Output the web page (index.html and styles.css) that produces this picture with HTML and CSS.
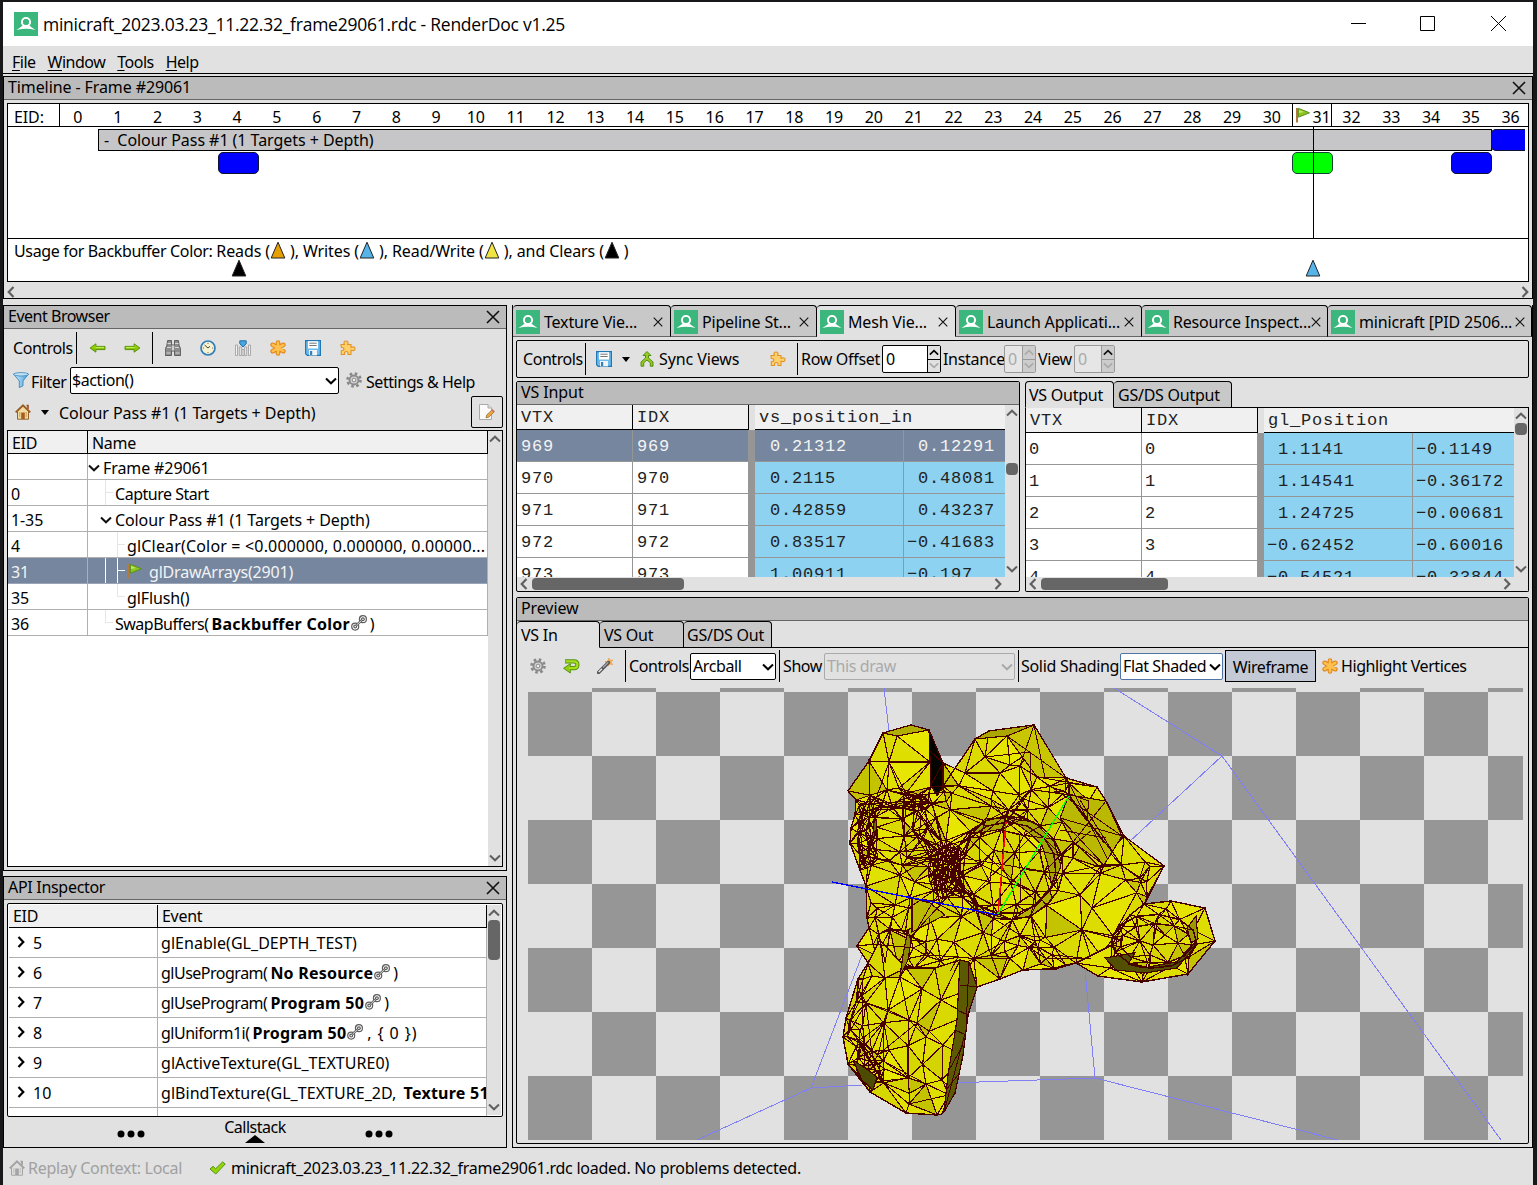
FILE: index.html
```html
<!DOCTYPE html>
<html lang="en">
<head>
<meta charset="utf-8">
<title>minicraft_2023.03.23_11.22.32_frame29061.rdc - RenderDoc v1.25</title>
<link rel="stylesheet" href="styles.css">
</head>
<body>
<svg width="0" height="0" class="defs">
<defs>
<linearGradient id="gb" x1="0" y1="0" x2="1" y2="0"><stop offset="0" stop-color="#d8f0fc"/><stop offset="1" stop-color="#3f9fd8"/></linearGradient>
<linearGradient id="gg" x1="0" y1="0" x2="0" y2="1"><stop offset="0" stop-color="#a9e000"/><stop offset="1" stop-color="#72b400"/></linearGradient>
<symbol id="logo" viewBox="0 0 24 24"><rect width="24" height="24" fill="#3bb77e"/><circle cx="12" cy="10" r="4" fill="none" stroke="#fff" stroke-width="2.2"/><path d="M2.5 18 Q7 15.5 9.5 12.5 L14.5 12.5 Q17 15.5 21.5 18 Q12 15.6 2.5 18Z" fill="#fff"/><circle cx="12" cy="10" r="2.9" fill="#3bb77e"/></symbol>
<symbol id="x" viewBox="0 0 14 14"><path d="M1 1L13 13M13 1L1 13" stroke="#111" stroke-width="1.6" fill="none"/></symbol>
<symbol id="down" viewBox="0 0 12 8"><path d="M1 1.5L6 6.3L11 1.5" stroke="currentColor" stroke-width="2" fill="none"/></symbol>
<symbol id="up" viewBox="0 0 12 8"><path d="M1 6.5L6 1.7L11 6.5" stroke="currentColor" stroke-width="2" fill="none"/></symbol>
<symbol id="right" viewBox="0 0 8 12"><path d="M1.5 1L6.3 6L1.5 11" stroke="currentColor" stroke-width="2.2" fill="none"/></symbol>
<symbol id="left" viewBox="0 0 8 12"><path d="M6.5 1L1.7 6L6.5 11" stroke="currentColor" stroke-width="2.2" fill="none"/></symbol>
<symbol id="tri" viewBox="0 0 16 18"><path d="M8 1.2L14.8 17H1.2Z" fill="currentColor" stroke="#222" stroke-width="1"/></symbol>
<symbol id="flag" viewBox="0 0 16 16"><path d="M2 1V15.5" stroke="#b07a3a" stroke-width="2"/><path d="M3.4 1.3L14.5 5.8L3.4 10.2Z" fill="#8cc61e" stroke="#5c8f1e"/><path d="M4 3L9 5L4 6Z" fill="#c3e86b"/></symbol>
<symbol id="arrR" viewBox="0 0 16 10"><path d="M.5 3.4H9.6V.8L15.4 5L9.6 9.2V6.6H.5Z" fill="url(#gg)" stroke="#5a9410"/><path d="M1.5 4.4H10" stroke="#d5f57a" stroke-width=".8"/></symbol>
<symbol id="bino" viewBox="0 0 16 16"><path d="M2.600 .5H6.500V5H9.500V.5H13.400L14.200 6L15.700 8.500V15.500H9.500V11H6.500V15.500H.3V8.500L1.800 6Z" fill="#8c8c8c" stroke="#555" stroke-width=".9"/><path d="M1.500 13H5.500M10.500 13H14.500M2.500 3.500H6M10 3.500H13.500M2 7.500H6M10 7.500H14" stroke="#d6d6d6"/><path d="M8 5.500V10.500" stroke="#eee" stroke-width="1.4"/></symbol>
<symbol id="clock" viewBox="0 0 16 16"><circle cx="8" cy="8" r="7" fill="#f7f1cf" stroke="#2f7fbd" stroke-width="1.7"/><path d="M4.500 5L8 8L10 6.300" stroke="#444" fill="none"/><path d="M8 2.800V4M8 12V13.200M2.800 8H4M12 8H13.200" stroke="#777"/></symbol>
<symbol id="bars" viewBox="0 0 16 16"><path d="M.5 15.500V5H2.500V15.500ZM4.300 15.500V7H6.300V15.500ZM9.700 15.500V7H11.700V15.500ZM13.500 15.500V5H15.500V15.500ZM7 15.500V9.500H9V15.500Z" fill="#f1f1f1" stroke="#999" stroke-width=".8"/><path d="M4.800.8H11.200V3.800L8 7L4.800 3.800Z" fill="#4ba4dc" stroke="#1f70ad"/></symbol>
<symbol id="star" viewBox="0 0 16 16"><g stroke="#e08418" stroke-width="4.6" stroke-linecap="round"><path d="M8 2.500V13.500M2.700 4.800L13.300 11.200M13.300 4.800L2.700 11.200"/></g><g stroke="#ffc04d" stroke-width="2.6" stroke-linecap="round"><path d="M8 2.500V13.500M2.700 4.800L13.300 11.200M13.300 4.800L2.700 11.200"/></g></symbol>
<symbol id="save" viewBox="0 0 16 16"><path d="M.6.6H15.400V15.400H2.300L.6 13.700Z" fill="#6dbbec" stroke="#2177b5" stroke-width="1.2"/><rect x="3" y="1.200" width="10" height="7.300" fill="#fff"/><path d="M4.300 3.200H11.700M4.300 5.500H11.700" stroke="#777"/><rect x="4" y="10" width="8" height="5.400" fill="#eef4f8"/><rect x="5" y="11" width="2.200" height="4" fill="#3a7eb2"/></symbol>
<symbol id="ext" viewBox="0 0 16 16"><path d="M1 4.5H4.4Q3 1 6 1T7.7 4.500H11V7.300Q15 6 15 8.800T11 10.200V14.500H8Q8.500 11.500 6.300 11.500T4.500 14.500H1.300V10.700Q4 10.500 4 9T1.300 7.500Z" fill="#ffd06a" stroke="#e09428" stroke-width="1.1"/></symbol>
<symbol id="filter" viewBox="0 0 16 16"><path d="M.5 2L6.300 9V15.600L10 13.800V9L15.500 2Z" fill="url(#gb)" stroke="#3d86bb" stroke-width=".9"/><ellipse cx="8" cy="2.300" rx="7.500" ry="1.700" fill="#bfe2f5" stroke="#3d86bb" stroke-width=".8"/></symbol>
<symbol id="gear" viewBox="0 0 16 16"><circle cx="8" cy="8" r="6.500" fill="none" stroke="#888" stroke-width="2.600" stroke-dasharray="2.550 2.550"/><circle cx="8" cy="8" r="4.500" fill="#d5d5d5" stroke="#8b8b8b" stroke-width="1.900"/><circle cx="8" cy="8" r="1.900" fill="#eee" stroke="#888"/></symbol>
<symbol id="home" viewBox="0 0 16 16"><path d="M2.5 7V15.200H13.500V7L8 2Z" fill="#f3dca0" stroke="#926332"/><path d="M11.500 1.500H13V5" stroke="#9b4b25" fill="none" stroke-width="1.600"/><path d="M.7 8.400L8 1.400L15.300 8.400" fill="none" stroke="#9a6028" stroke-width="2"/><rect x="6.200" y="8.500" width="3.600" height="6.500" fill="#a85d20"/><path d="M4.800 8V13M11.200 8V13" stroke="#c99a50"/></symbol>
<symbol id="edit" viewBox="0 0 16 16"><path d="M.5 .5H9L12.500 4V15.500H.5Z" fill="#fbfbfb" stroke="#aaa"/><path d="M9 .5V4H12.500" fill="#ddd" stroke="#aaa"/><path d="M7 13.800L7.800 11L13.200 5.600L15.300 7.700L9.800 13.100Z" fill="#f0a93a" stroke="#8e6935" stroke-width=".8"/><path d="M12.300 6.500L14.400 8.600L15.600 7.200L13.600 5.200Z" fill="#d2706a"/></symbol>
<symbol id="link" viewBox="0 0 16 16"><g fill="none" stroke="#5d5d5d" stroke-width="1.2"><circle cx="4.200" cy="11.600" r="3.500"/><circle cx="4.200" cy="11.600" r="1.400"/><circle cx="11.900" cy="4.200" r="3.500"/><circle cx="11.900" cy="4.200" r="1.400"/></g><path d="M5.500 10.200L10.600 5.400" stroke="#666" stroke-width="2.500"/><path d="M5.700 10L10.400 5.600" stroke="#ddd" stroke-width=".9"/></symbol>
<symbol id="sync" viewBox="0 0 14 16"><path d="M7 .5L11 4.500H8.500V7L13 11V15.200H10.300V11.800L7 9L3.700 11.800V15.200H1V11L5.500 7V4.500H3Z" fill="#9acb21" stroke="#4f8d12"/></symbol>
<symbol id="undo" viewBox="0 0 17 16"><path d="M2 3.300H11Q14.400 3.300 14.400 6.700T11 10.200H6" fill="none" stroke="#589115" stroke-width="4.200"/><path d="M7.300 5.700V15L.6 10.300Z" fill="#8fd00b" stroke="#589115"/><path d="M2.500 3.300H11Q14.400 3.300 14.400 6.700T11 10.200H6" fill="none" stroke="#a4df18" stroke-width="2.200"/></symbol>
<symbol id="wand" viewBox="0 0 16 16"><path d="M12 0L13 2.500L15.800 2L14 4.300L15.800 6.600L12.900 6L11 8L10.700 5L8 4L10.800 3Z" fill="#ffbb55" stroke="#ed8f2d" stroke-width=".6"/><path d="M1.500 14.500L11.500 4.500" stroke="#555" stroke-width="3.400" stroke-linecap="round"/><path d="M1.700 14L5 10.800" stroke="#eee" stroke-width="1.300"/><path d="M6 9.500L11.300 4.300" stroke="#a0a8b5" stroke-width="1.200"/></symbol>
<symbol id="check" viewBox="0 0 17 14"><path d="M1 8L4 5.300L6.600 7.800L13.600 .9L16.200 3L6.800 13Z" fill="#92d50b" stroke="#578f12"/></symbol>
</defs>
</svg>

<div class="window">
  <header class="titlebar">
    <svg class="i24"><use href="#logo"/></svg>
    <span class="title">minicraft_2023.03.23_11.22.32_frame29061.rdc - RenderDoc v1.25</span>
    <svg class="winbtns" viewBox="0 0 157 18"><path d="M1 8.500H16M70.500 1.500H84.500V15.500H70.500ZM141 1L156 16M156 1L141 16" fill="none" stroke="#000"/></svg>
  </header>
  <nav class="menubar"><span><u>F</u>ile</span><span><u>W</u>indow</span><span><u>T</u>ools</span><span><u>H</u>elp</span></nav>

  <section class="dock timeline">
    <div class="dockhead"><span>Timeline - Frame #29061</span><svg class="cx"><use href="#x"/></svg></div>
    <div class="tl">
      <div class="ruler"><b class="eid">EID:</b><div class="ticks"><i>0</i><i>1</i><i>2</i><i>3</i><i>4</i><i>5</i><i>6</i><i>7</i><i>8</i><i>9</i><i>10</i><i>11</i><i>12</i><i>13</i><i>14</i><i>15</i><i>16</i><i>17</i><i>18</i><i>19</i><i>20</i><i>21</i><i>22</i><i>23</i><i>24</i><i>25</i><i>26</i><i>27</i><i>28</i><i>29</i><i>30</i><i class="cur"><svg class="i16"><use href="#flag"/></svg>31</i><i>32</i><i>33</i><i>34</i><i>35</i><i>36</i></div></div>
      <div class="lanes">
        <div class="pass">-&nbsp; Colour Pass #1 (1 Targets + Depth)</div>
        <div class="ev e36"></div><div class="ev e4"></div><div class="ev e31"></div><div class="ev e35"></div>
        <div class="cursor"></div>
      </div>
      <div class="usage">
        <div class="legend"><em>Usage for Backbuffer Color: </em>Reads (<svg class="tri or"><use href="#tri"/></svg>), Writes (<svg class="tri bl"><use href="#tri"/></svg>), Read/Write (<svg class="tri ye"><use href="#tri"/></svg>), and Clears (<svg class="tri"><use href="#tri"/></svg>)</div>
        <svg class="tri m4"><use href="#tri"/></svg><svg class="tri bl m31"><use href="#tri"/></svg>
      </div>
    </div>
    <div class="hs"><svg class="ch"><use href="#left"/></svg><svg class="ch"><use href="#right"/></svg></div>
  </section>

  <main class="work">
    <div class="leftcol">
      <section class="dock events">
        <div class="dockhead"><span class="tight">Event Browser</span><svg class="cx"><use href="#x"/></svg></div>
        <div class="bar b1"><span class="w63">Controls</span><hr><svg class="arr flip"><use href="#arrR"/></svg><svg class="arr"><use href="#arrR"/></svg><hr class="h2"><div class="tools"><svg class="i16"><use href="#bino"/></svg><svg class="i16"><use href="#clock"/></svg><svg class="i16"><use href="#bars"/></svg><svg class="i16"><use href="#star"/></svg><svg class="i16"><use href="#save"/></svg><svg class="i16"><use href="#ext"/></svg></div></div>
        <div class="bar b2"><svg class="i16"><use href="#filter"/></svg><span class="flt">Filter</span><div class="combo c1"><span>$action()</span><svg class="dn"><use href="#down"/></svg></div><svg class="i16 g"><use href="#gear"/></svg><span class="set">Settings &amp; Help</span></div>
        <div class="bar b3"><svg class="i16"><use href="#home"/></svg><i class="caret"></i><span class="crumb">Colour Pass #1 (1 Targets + Depth)</span><div class="editbtn"><svg class="i16"><use href="#edit"/></svg></div></div>
        <div class="table t1">
          <div class="rows">
            <div class="hd"><span>EID</span><span>Name</span></div>
            <div class="r"><span></span><span class="n0"><svg class="dn"><use href="#down"/></svg><em>Frame #29061</em></span></div>
            <div class="r"><span>0</span><span class="n1 leaf tight">Capture Start</span></div>
            <div class="r"><span>1-35</span><span class="n1x"><svg class="dn"><use href="#down"/></svg><em>Colour Pass #1 (1 Targets + Depth)</em></span></div>
            <div class="r"><span>4</span><span class="n2 leaf2 clr">glClear(Color = &lt;0.000000, 0.000000, 0.00000...</span></div>
            <div class="r sel"><span>31</span><span class="n2 leaf2 draw"><svg class="i16 fl"><use href="#flag"/></svg>glDrawArrays(2901)</span></div>
            <div class="r"><span>35</span><span class="n2 leaf2 end">glFlush()</span></div>
            <div class="r"><span>36</span><span class="n1 leaf end"><em class="pre">SwapBuffers(</em><b>Backbuffer Color</b><svg class="i16"><use href="#link"/></svg>)</span></div>
          </div>
          <div class="vs"><svg class="cv"><use href="#up"/></svg><svg class="cv"><use href="#down"/></svg></div>
        </div>
      </section>
      <section class="dock api">
        <div class="dockhead"><span class="api-t">API Inspector</span><svg class="cx"><use href="#x"/></svg></div>
        <div class="table t2">
          <div class="rows">
            <div class="hd"><span>EID</span><span>Event</span></div>
            <div class="r"><span><svg class="rt"><use href="#right"/></svg>5</span><span>glEnable(GL_DEPTH_TEST)</span></div>
            <div class="r"><span><svg class="rt"><use href="#right"/></svg>6</span><span><em class="pre">glUseProgram(</em><b>No Resource</b><svg class="i16"><use href="#link"/></svg>)</span></div>
            <div class="r"><span><svg class="rt"><use href="#right"/></svg>7</span><span><em class="pre">glUseProgram(</em><b>Program 50</b><svg class="i16"><use href="#link"/></svg>)</span></div>
            <div class="r"><span><svg class="rt"><use href="#right"/></svg>8</span><span><em class="pre">glUniform1i(</em><b>Program 50</b><svg class="i16"><use href="#link"/></svg><em class="args">, { 0 })</em></span></div>
            <div class="r"><span><svg class="rt"><use href="#right"/></svg>9</span><span>glActiveTexture(GL_TEXTURE0)</span></div>
            <div class="r"><span><svg class="rt"><use href="#right"/></svg>10</span><span>glBindTexture(GL_TEXTURE_2D,&nbsp;<b>Texture 51</b></span></div>
            <div class="r"><span></span><span></span></div>
          </div>
          <div class="vs"><svg class="cv"><use href="#up"/></svg><i class="thumb"></i><svg class="cv"><use href="#down"/></svg></div>
        </div>
        <div class="callstack"><svg class="dots" viewBox="0 0 28 8"><circle cx="4" cy="4" r="3.500"/><circle cx="14" cy="4" r="3.500"/><circle cx="24" cy="4" r="3.500"/></svg><div class="cs"><span>Callstack</span><i></i></div><svg class="dots" viewBox="0 0 28 8"><circle cx="4" cy="4" r="3.500"/><circle cx="14" cy="4" r="3.500"/><circle cx="24" cy="4" r="3.500"/></svg></div>
      </section>
    </div>

    <div class="rightcol">
      <div class="tabs">
        <div class="tab w158"><svg class="i24"><use href="#logo"/></svg><span>Texture Vie...</span><svg class="tx"><use href="#x"/></svg></div>
        <div class="tab w146"><svg class="i24"><use href="#logo"/></svg><span>Pipeline St...</span><svg class="tx"><use href="#x"/></svg></div>
        <div class="tab w139 on"><svg class="i24"><use href="#logo"/></svg><span>Mesh Vie...</span><svg class="tx"><use href="#x"/></svg></div>
        <div class="tab w186"><svg class="i24"><use href="#logo"/></svg><span>Launch Applicati...</span><svg class="tx"><use href="#x"/></svg></div>
        <div class="tab w186"><svg class="i24"><use href="#logo"/></svg><span>Resource Inspect...</span><svg class="tx"><use href="#x"/></svg></div>
        <div class="tab w204"><svg class="i24"><use href="#logo"/></svg><span>minicraft [PID 2506...</span><svg class="tx"><use href="#x"/></svg></div>
      </div>
      <div class="panes">
        <div class="mbar"><span class="w63">Controls</span><hr><svg class="i16 s1"><use href="#save"/></svg><i class="caret"></i><svg class="sy"><use href="#sync"/></svg><span class="w116">Sync Views</span><svg class="i16 s2"><use href="#ext"/></svg><hr><span class="ro">Row Offset</span><div class="spin k1"><span>0</span><div><svg><use href="#up"/></svg><svg class="dim"><use href="#down"/></svg></div></div><span class="in">Instance</span><div class="spin off"><span>0</span><div><svg><use href="#up"/></svg><svg><use href="#down"/></svg></div></div><span class="vw">View</span><div class="spin off k3"><span>0</span><div><svg class="act"><use href="#up"/></svg><svg><use href="#down"/></svg></div></div></div>
        <div class="split">
          <div class="vsin">
            <div class="dockhead"><span>VS Input</span></div>
            <div class="grid gi">
              <div class="cells">
                <div class="gh"><span>VTX</span><span>IDX</span><i></i><span class="wide">vs_position_in</span></div>
                <div class="gr sel"><span>969</span><span>969</span><i></i><span class="v">&nbsp;0.21312</span><span class="v">&nbsp;0.12291</span></div>
                <div class="gr"><span>970</span><span>970</span><i></i><span class="v">&nbsp;0.2115</span><span class="v">&nbsp;0.48081</span></div>
                <div class="gr"><span>971</span><span>971</span><i></i><span class="v">&nbsp;0.42859</span><span class="v">&nbsp;0.43237</span></div>
                <div class="gr"><span>972</span><span>972</span><i></i><span class="v">&nbsp;0.83517</span><span class="v">−0.41683</span></div>
                <div class="gr"><span>973</span><span>973</span><i></i><span class="v">&nbsp;1.00911</span><span class="v">−0.197</span></div>
              </div>
              <div class="vs"><svg class="cv"><use href="#up"/></svg><i class="thumb"></i><svg class="cv"><use href="#down"/></svg></div>
            </div>
            <div class="ghs"><svg class="ch"><use href="#left"/></svg><i></i><svg class="ch"><use href="#right"/></svg></div>
          </div>
          <div class="vsout">
            <div class="stabs"><div class="stab on a">VS Output</div><div class="stab b">GS/DS Output</div><div class="fill"></div></div>
            <div class="outbox">
            <div class="grid go">
              <div class="cells">
                <div class="gh"><span>VTX</span><span>IDX</span><i></i><span class="wide">gl_Position</span></div>
                <div class="gr"><span>0</span><span>0</span><i></i><span class="v">&nbsp;1.1141</span><span class="v">−0.1149</span></div>
                <div class="gr"><span>1</span><span>1</span><i></i><span class="v">&nbsp;1.14541</span><span class="v">−0.36172</span></div>
                <div class="gr"><span>2</span><span>2</span><i></i><span class="v">&nbsp;1.24725</span><span class="v">−0.00681</span></div>
                <div class="gr"><span>3</span><span>3</span><i></i><span class="v">−0.62452</span><span class="v">−0.60016</span></div>
                <div class="gr"><span>4</span><span>4</span><i></i><span class="v">−0.54521</span><span class="v">−0.33844</span></div>
              </div>
              <div class="vs"><svg class="cv"><use href="#up"/></svg><i class="thumb"></i><svg class="cv"><use href="#down"/></svg></div>
            </div>
            <div class="ghs g2"><svg class="ch"><use href="#left"/></svg><i></i><svg class="ch"><use href="#right"/></svg></div>
            </div>
          </div>
        </div>
        <div class="preview">
          <div class="dockhead"><span>Preview</span></div>
          <div class="stabs p"><div class="stab on a">VS In</div><div class="stab b">VS Out</div><div class="stab c">GS/DS Out</div><div class="fill"></div></div>
          <div class="pbar"><svg class="i16 q1"><use href="#gear"/></svg><svg class="q2"><use href="#undo"/></svg><svg class="i16 q3"><use href="#wand"/></svg><hr><span class="pc">Controls</span><div class="combo c2"><span>Arcball</span><svg class="dn"><use href="#down"/></svg></div><hr><span class="ps">Show</span><div class="combo c3"><span>This draw</span><svg class="dn"><use href="#down"/></svg></div><hr><span class="pss">Solid Shading</span><div class="combo c4"><span>Flat Shaded</span><svg class="dn"><use href="#down"/></svg></div><div class="wire">Wireframe</div><svg class="i16 q4"><use href="#star"/></svg><span class="hv">Highlight Vertices</span></div>
          <svg id="view" class="view" viewBox="528 688 995 452"></svg>
        </div>
      </div>
    </div>
  </main>
  <footer class="status"><svg class="i16 grey"><use href="#home"/></svg><span class="rc">Replay Context: Local</span><svg class="ck"><use href="#check"/></svg><span class="msg">minicraft_2023.03.23_11.22.32_frame29061.rdc loaded. No problems detected.</span></footer>
</div>
<script src="mesh.js"></script>
</body>
</html>
```
FILE: styles.css
```css
* { box-sizing: border-box; }
body { margin: 0; padding: 2px 4px 0 3px; width: 1537px; height: 1185px; overflow: hidden; background: #18181a; font: 16px/22px "Noto Sans", sans-serif; color: #000; letter-spacing: -.1px; }
svg { display: block; flex: none; overflow: visible; }
i, em { font-style: normal; }
span { white-space: nowrap; }
hr { margin: 0; border: 0; width: 1px; height: 32px; background: #000; flex: none; }
.defs { position: absolute; }
.i16 { width: 16px; height: 16px; }
.i24 { width: 24px; height: 24px; }
.tight { letter-spacing: -.48px; }
.api-t { letter-spacing: -.3px; }
.window { height: 1183px; background: #e1e1e1; display: flex; flex-direction: column; }
.titlebar { height: 44px; background: #fff; display: flex; align-items: center; padding: 0 26px 0 11px; }
.title { flex: 1; margin-left: 5px; font: 17.5px "Open Sans", sans-serif; letter-spacing: -.25px; }
.winbtns { width: 157px; height: 18px; }
.menubar { height: 28px; border-bottom: 1px solid #000; display: flex; padding: 5px 0 0 9px; gap: 12px; letter-spacing: -.5px; }
.menubar u { text-underline-offset: 2px; }
.dock { border: 1px solid #000; background: #e1e1e1; display: flex; flex-direction: column; }
.dockhead { height: 23px; flex: none; background: #bbb; border-bottom: 1px solid #666; display: flex; align-items: center; justify-content: space-between; padding: 0 6px 2px 4px; }
.cx { width: 14px; height: 14px; margin-top: 2px; }

.timeline { height: 223px; margin-top: 2px; padding: 0; flex: none; }
.tl { margin: 3px 3px 0 3px; height: 179px; border: 1px solid #000; background: #fff; display: flex; flex-direction: column; }
.ruler { height: 23px; border-bottom: 1px solid #000; display: flex; }
.eid { width: 52px; border-right: 1px solid #000; font-weight: 400; padding: 2px 0 0 6px; flex: none; }
.ticks { display: grid; grid-template-columns: repeat(37, 39.8px); margin-left: -2px; }
.ticks i { text-align: center; padding-top: 2px; height: 22px; }
.ticks .cur { border: solid #000; border-width: 0 1px; display: flex; justify-content: space-between; padding-left: 2px; }
.cur .i16 { margin-top: 1px; }
.lanes { position: relative; height: 111px; }
.pass { position: absolute; left: 90px; top: 2px; width: 1394px; height: 22px; border: 1px solid #000; background: #c6c6c8; line-height: 20px; padding-left: 5px; white-space: nowrap; letter-spacing: -.05px; }
.ev { position: absolute; width: 41px; height: 22px; top: 25px; background: #00f; border: 1px solid #113; border-radius: 5px; }
.e4 { left: 210px; } .e31 { left: 1284px; background: #0f0; border-color: #143; } .e35 { left: 1443px; }
.e36 { left: 1483px; top: 2px; width: 34px; border-radius: 5px 0 0 5px; border-right: 0; }
.cursor { position: absolute; left: 1305px; top: 0; width: 1px; height: 111px; background: #000; }
.usage { position: relative; border-top: 1px solid #000; flex: 1; }
.legend { display: flex; align-items: center; padding: 1px 0 0 6px; white-space: pre; }
.legend em { letter-spacing: -.35px; }
.tri { width: 16px; height: 18px; margin: -3px 4px 0 0; color: #000; }
.or { color: #e69f00; } .bl { color: #56b4e9; } .ye { color: #f0e442; }
.m4 { position: absolute; left: 223px; top: 23px; } .m31 { position: absolute; left: 1297px; top: 23px; }
.hs { display: flex; justify-content: space-between; align-items: center; flex: 1; padding: 4px 3px 0 3px; }
.ch { width: 8px; height: 12px; color: #606060; }

.work { display: flex; margin-top: 6px; height: 843px; flex: none; }
.leftcol { width: 504px; display: flex; flex-direction: column; gap: 5px; }
.events { height: 566px; flex: none; }
.bar { display: flex; align-items: center; flex: none; }
.b1 { height: 38px; padding: 0 0 0 9px; }
.w63 { width: 63px; flex: none; letter-spacing: -.45px; }
.arr { width: 17px; height: 10px; margin-left: 18px; }
.flip { transform: scaleX(-1); margin-left: 12px; }
.h2 { margin-left: 11px; }
.tools { display: flex; gap: 19px; margin-left: 12px; }
.b2 { height: 28px; padding: 0 0 2px 9px; }
.flt { width: 38px; margin: 3px 0 0 2px; letter-spacing: -.4px; }
.combo { display: flex; align-items: center; justify-content: space-between; background: #fff; border: 1px solid #000; border-radius: 2px; height: 27px; padding: 0 1px 1px 2px; }
.combo span { letter-spacing: -.4px; }
.dn { width: 12px; height: 8px; margin-top: 3px; }
.c1 { width: 269px; margin-left: 1px; padding-left: 1px; }
.g { margin-left: 7px; } .set { margin: 3px 0 0 4px; letter-spacing: -.45px; }
.b3 { height: 34px; padding: 1px 3px 1px 11px; }
.caret { border: 4px solid transparent; border-top: 5px solid #000; border-bottom: 0; width: 8px; margin-left: 10px; }
.crumb { flex: 1; margin-left: 10px; padding-top: 2px; letter-spacing: -.04px; }
.editbtn { width: 32px; height: 32px; border: 1px solid #000; border-radius: 2px; display: grid; place-items: center; }
.table { border: 1px solid #000; background: #fff; display: flex; overflow: hidden; flex: none; }
.rows { flex: 1; min-width: 0; }
.t1 { height: 437px; margin: 1px 3px 0; }
.hd, .r { display: grid; }
.t1 .hd, .t1 .r { grid-template-columns: 80px 400px; }
.hd { background: #f0f0f0; border-bottom: 1px solid #000; height: 23px; }
.hd span { border-right: 1px solid #000; padding: 1px 0 0 4px; letter-spacing: -.3px; }
.r > span { border-right: 1px solid #b0b0b0; border-bottom: 1px solid #b0b0b0; height: 26px; line-height: 24px; padding: 3px 0 0 3px; display: flex; align-items: center; overflow: hidden; position: relative; white-space: pre; }
.r.sel > span { background: #76869e; color: #f3f3f3; border-bottom-color: #9aa6b8; }
.r .dn { margin: 0 3px 0 -3px; color: #111; }
.r .n0 { padding-left: 3px; }
.r .n1 { padding-left: 27px; } .r .n1x { padding-left: 15px; } .r .n2 { padding-left: 39px; }
.r > .clr { letter-spacing: .17px; }
.draw { letter-spacing: -.2px; }
.leaf::before, .leaf2::before { content: ""; position: absolute; left: 17px; top: 0; height: 26px; width: 7px; border-left: 1px solid #e6e6e6; background: linear-gradient(#e6e6e6,#e6e6e6) 0 12px / 7px 1px no-repeat; }
.leaf2::before { left: 29px; }
.end::before { height: 13px; }
.sel .leaf2::before { border-color: #fff; background-image: linear-gradient(#fff,#fff); }
.sel .leaf2::after { content: ""; position: absolute; left: 17px; top: 0; width: 1px; height: 26px; background: #fff; }
.r .pre { letter-spacing: -.5px; }
.r .args { letter-spacing: .9px; margin-left: 1px; }
.r b { margin-left: 3px; letter-spacing: .24px; } .r .i16 { margin: -2px 3px 0 1px; }
.r .fl { margin: -2px 6px 0 0; }
.vs { width: 14px; background: #e1e1e1; display: flex; flex-direction: column; align-items: center; justify-content: space-between; padding: 4px 0; flex: none; color: #606060; }
.cv { width: 12px; height: 8px; }
.thumb { width: 12px; background: #666; border-radius: 4px; }

.api { height: 272px; flex: none; }
.t2 { height: 214px; margin: 3px 3px 0; padding: 1px; border-radius: 2px; }
.t2 .hd, .t2 .r { grid-template-columns: 149px 329px; }
.t2 .hd span { padding-top: 0; }
.t2 .r > span { height: 30px; padding-top: 1px; letter-spacing: .04px; }
.t2 .r > span > em.pre { letter-spacing: -.5px; }
.t2 .rows > .r > span:first-child { padding-left: 0; }
.t2 .r .rt { width: 8px; height: 14px; margin: -2px 8px 0 8px; }
.t2 .thumb { height: 40px; margin-bottom: auto; margin-top: 3px; }
.callstack { display: flex; align-items: flex-start; justify-content: center; flex: 1; gap: 79px; }
.dots { width: 28px; height: 8px; margin-top: 13px; }
.cs { width: 62px; height: 29px; line-height: 20px; display: flex; flex-direction: column; align-items: center; letter-spacing: -.5px; }
.cs i { border: 10px solid transparent; border-bottom: 8px solid #000; border-top: 0; }
.cs span { height: 18px; }

.rightcol { width: 1021px; margin-left: 5px; border: 1px solid #000; border-top: 0; display: flex; flex-direction: column; flex: none; }
.tabs { height: 32px; display: flex; flex: none; }
.tab { background: #c8c8c8; border: 1px solid #000; border-left: 0; border-bottom-color: #666; border-radius: 4px 4px 0 0; display: flex; align-items: center; padding: 1px 7px 0 3px; justify-content: space-between; flex: none; }
.tab span { flex: 1; margin-left: 4px; letter-spacing: -.18px; }
.tab.on { background: #e1e1e1; border-bottom-color: #e1e1e1; }
.tx { width: 10px; height: 10px; }
.w158 { width: 158px; } .w146 { width: 146px; } .w139 { width: 139px; } .w186 { width: 186px; } .tab.w204 { width: 204px; padding-right: 6px; }
.panes { padding: 3px 3px 0 3px; display: flex; flex-direction: column; flex: 1; }
.mbar { height: 38px; border: 1px solid #000; border-radius: 2px; display: flex; align-items: center; padding-left: 6px; flex: none; }
.s1 { margin-left: 10px; } .sy { width: 14px; height: 16px; margin-left: 10px; } .w116 { width: 112px; margin-left: 5px; }
.s2 { margin: 0 11px 0 -1px; }
.mbar .w63 { letter-spacing: -.45px; width: 62px; }
.mbar span { letter-spacing: -.3px; flex: none; }
.ro { width: 81px; margin-left: 3px; } .in { width: 61px; margin-left: 2px; } .vw { width: 36px; margin-left: 2px; }
.mbar .w116 { letter-spacing: -.1px; }
.spin { width: 32px; height: 28px; border: 1px solid #000; border-radius: 2px; background: #fff; display: flex; flex: none; }
.spin span { flex: 1; padding: 2px 0 0 3px; }
.spin > div { width: 13px; border-left: 1px solid #000; display: grid; grid-template-rows: 13px 13px; place-items: center; background: linear-gradient(#000,#000) 0 13px/100% 1px no-repeat #e1e1e1; }
.spin > div svg { width: 10px; height: 7px; }
.spin .dim { color: #aaa; }
.spin.off { background: #e6e6e6; border-color: #999; color: #aaa; } .spin.off > div { border-color: #999; background: linear-gradient(#999,#999) 0 13px/100% 1px no-repeat #ccc; } .act { color: #111; }
.spin.k1 { width: 59px; } .spin.k3 { width: 41px; }
.split { display: flex; gap: 5px; margin-top: 3px; height: 211px; flex: none; }
.vsin { width: 504px; border: 1px solid #000; border-radius: 2px; display: flex; flex-direction: column; }
.grid { display: flex; overflow: hidden; font: 17px/24px "Liberation Mono", monospace; letter-spacing: .8px; color: #222; }
.gi { height: 172px; } .go { height: 169px; }
.cells { flex: 1; min-width: 0; overflow: hidden; }
.gh, .gr { display: grid; grid-template-columns: 116px 116px 6px 149px 101px; }
.gh { height: 25px; background: #f0f0f0; border-bottom: 1px solid #000; }
.gh span { border-right: 1px solid #000; padding: 1px 0 0 4px; }
.gh i { background: #e1e1e1; }
.gh .wide { grid-column: span 2; border: 0; padding-left: 4px; }
.gr span { height: 32px; border: solid #969696; border-width: 0 1px 1px 0; background: #fff; padding: 5px 0 0 4px; }
.gr i { background: #969696; }
.gr .v { background: #8dd2f0; }
.gr span:last-child { border-right: 0; padding-left: 3px; }
.gr.sel span { background: #76869e; color: #f3f3f3; }
.go .gr span { padding-left: 3px; }
.gi .thumb { height: 12px; margin-bottom: auto; margin-top: 46px; } .go .thumb { height: 12px; margin-bottom: auto; margin-top: 3px; }
.ghs { flex: 1; display: flex; align-items: center; padding: 0 17px 0 3px; gap: 4px; }
.ghs i { width: 152px; height: 12px; background: #666; border-radius: 4px; margin-right: auto; }
.g2 i { width: 127px; }
.vsout { width: 504px; display: flex; flex-direction: column; }
.stabs { display: flex; height: 27px; flex: none; }
.stab { border: 1px solid #000; border-left: 0; border-radius: 4px 4px 0 0; background: #c8c8c8; padding: 2px 0 0 4px; white-space: nowrap; flex: none; letter-spacing: -.25px; }
.stab.on { background: #e1e1e1; border-bottom-color: transparent; border-left: 1px solid #000; padding-left: 3px; }
.fill { flex: 1; border-bottom: 1px solid #000; }
.vsout .a { width: 89px; } .vsout .b { width: 118px; }
.outbox { flex: 1; border: 1px solid #000; border-top: 0; border-radius: 0 0 2px 2px; display: flex; flex-direction: column; }
.preview { margin-top: 5px; height: 547px; border: 1px solid #000; border-radius: 2px; display: flex; flex-direction: column; }
.p .a { width: 83px; border-left: 0; padding-left: 4px; } .p .b { width: 84px; } .p .c { width: 88px; padding-left: 3px; }
.pbar { height: 32px; margin: 2px 0 6px; display: flex; align-items: center; flex: none; letter-spacing: -.4px; }
.q1 { margin-left: 13px; } .q2 { width: 17px; height: 16px; margin-left: 17px; } .q3 { margin: 0 12px 0 17px; }
.pc { width: 61px; margin-left: 3px; } .ps { width: 41px; margin-left: 3px; } .pss { width: 99px; margin-left: 2px; letter-spacing: -.3px; }
.c2 { width: 86px; margin-right: 3px; } .c3 { width: 191px; margin-right: 3px; background: #e1e1e1; border-color: #aaa; color: #aaa; }
.c4 { width: 103px; border-color: #4f74a8; }
.pbar span { flex: none; }
.wire { width: 91px; height: 32px; border: 1px solid #000; background: #c3cad6; margin-left: 2px; text-align: center; line-height: 32px; }
.q4 { margin: 0 3px 0 6px; }
.view { width: 995px; height: 452px; margin-left: 11px; overflow: hidden; }
.status { flex: 1; display: flex; align-items: center; padding: 3px 0 0 6px; }
.grey { filter: grayscale(1); opacity: .5; }
.rc { color: #a0a0a0; margin-left: 3px; width: 181px; letter-spacing: -.28px; }
.ck { width: 17px; height: 14px; } .msg { margin-left: 5px; letter-spacing: -.25px; }
```
FILE: mesh.js
```js
// Builds the wireframe mesh preview as SVG polygons.
(function () {
  var out = [];
  function poly(p, fill, stroke, w) {
    out.push('<polygon points="' + p.map(function (q) { return q[0].toFixed(1) + ',' + q[1].toFixed(1); }).join(' ') + '" fill="' + fill + '"' + (stroke ? ' stroke="' + stroke + '" stroke-width="' + (w || 1.15) + '"' : '') + '/>');
  }
  function line(x1, y1, x2, y2, c) {
    out.push('<path d="M' + [x1, y1].join(' ') + 'L' + [x2, y2].join(' ') + '" stroke="' + c + '" fill="none"/>');
  }
  // checkerboard
  out.push('<rect x="528" y="688" width="995" height="452" fill="#e1e1e1"/>');
  for (var r = -1; r < 7; r++) for (var c = 0; c < 16; c++) if ((r + c) % 2 === 0)
    out.push('<rect x="' + (528 + c * 64) + '" y="' + (692 + r * 64) + '" width="64" height="64" fill="#969696"/>');
  // bounding frustum
  var P = '#8080f4';
  [[884, 688, 889, 732], [1114, 688, 1222, 756], [1222, 756, 1350, 932], [1350, 932, 1501, 1140], [1222, 756, 1128, 843], [1085, 970, 1095, 1078], [950, 1083, 1095, 1078], [1095, 1078, 1338, 1140], [864, 950, 811, 1088], [811, 1088, 880, 1084], [811, 1088, 697, 1140]].forEach(function (l) { line(l[0], l[1], l[2], l[3], P); });

  var seed = 7;
  function rnd() { seed = (seed * 16807) % 2147483647; return seed / 2147483647; }
  function inside(p, g) {
    var k = false;
    for (var i = 0, j = g.length - 1; i < g.length; j = i++)
      if ((g[i][1] > p[1]) !== (g[j][1] > p[1]) && p[0] < (g[j][0] - g[i][0]) * (p[1] - g[i][1]) / (g[j][1] - g[i][1]) + g[i][0]) k = !k;
    return k;
  }
  function circ(a, b, c) {
    var d = 2 * (a[0] * (b[1] - c[1]) + b[0] * (c[1] - a[1]) + c[0] * (a[1] - b[1]));
    if (Math.abs(d) < 1e-6) return null;
    var A = a[0] * a[0] + a[1] * a[1], B = b[0] * b[0] + b[1] * b[1], C = c[0] * c[0] + c[1] * c[1];
    var x = (A * (b[1] - c[1]) + B * (c[1] - a[1]) + C * (a[1] - b[1])) / d, y = (A * (c[0] - b[0]) + B * (a[0] - c[0]) + C * (b[0] - a[0])) / d;
    return { t: [a, b, c], x: x, y: y, r: (a[0] - x) * (a[0] - x) + (a[1] - y) * (a[1] - y) };
  }
  function delaunay(pts) {
    var T = [circ([-4000, -3000], [6000, -3000], [1000, 9000])];
    pts.forEach(function (p) {
      var edges = [], keep = [];
      T.forEach(function (t) {
        if ((p[0] - t.x) * (p[0] - t.x) + (p[1] - t.y) * (p[1] - t.y) < t.r) edges.push([t.t[0], t.t[1]], [t.t[1], t.t[2]], [t.t[2], t.t[0]]);
        else keep.push(t);
      });
      edges.forEach(function (e, i) {
        if (edges.some(function (f, j) { return i !== j && ((e[0] === f[0] && e[1] === f[1]) || (e[0] === f[1] && e[1] === f[0])); })) return;
        var n = circ(e[0], e[1], p); if (n) keep.push(n);
      });
      T = keep;
    });
    return T;
  }
  function loop(cx, cy, rx, ry, n) { var a = []; for (var i = 0; i < n; i++) a.push([cx + rx * Math.cos(i * 6.283 / n + .1) + rnd() * .5, cy + ry * Math.sin(i * 6.283 / n + .1) + rnd() * .5]); return a; }
  function ring(a, cx, cy, rx, ry, n) { var l = loop(cx, cy, rx, ry, n); l.forEach(function (p) { a.push(p); }); return l; }
  function fill(a, outline, x, y, w, h, n) { while (n--) { var p = [x + rnd() * w, y + rnd() * h]; if (inside(p, outline)) a.push(p); } }
  var W = '#460000';
  function mesh(outline, pts) {
    poly(outline, '#d8d600');
    var all = outline.map(function (p) { return [p[0] + rnd() * .1, p[1] + rnd() * .1]; }).concat(pts);
    delaunay(all).forEach(function (t) {
      var a = t.t, m = [(a[0][0] + a[1][0] + a[2][0]) / 3, (a[0][1] + a[1][1] + a[2][1]) / 3];
      if (!inside(m, outline)) return;
      var s = rnd(), v = s > .9 ? 195 : 212 + Math.floor(rnd() * 20);
      poly(a, 'rgb(' + v + ',' + v + ',0)', W);
    });
    poly(outline, 'none', W, 1.4);
  }
  // lines of hidden and coplanar faces crossing between nearby vertices
  function cross(pts, outline, n, lo, hi) {
    var guard = 0;
    while (n > 0 && guard++ < 12000) {
      var a = pts[Math.floor(rnd() * pts.length)], b = pts[Math.floor(rnd() * pts.length)], d = Math.hypot(a[0] - b[0], a[1] - b[1]);
      var m = [(a[0] + b[0]) / 2, (a[1] + b[1]) / 2];
      if (d < lo || d > hi || !inside(m, outline)) continue;
      if (Math.hypot(m[0] - 1007, m[1] - 868) < 46) continue;
      line(a[0].toFixed(1), a[1].toFixed(1), b[0].toFixed(1), b[1].toFixed(1), W); n--;
    }
  }

  var ear = [[1098, 976], [1076, 963], [1112, 945], [1130, 915], [1144, 904], [1171, 901], [1205, 908], [1215, 941], [1188, 974], [1142, 982]];
  var ep = [[1166, 909], [1110, 968], [1143, 975], [1120, 940], [1140, 941], [1153, 945], [1165, 935], [1150, 955], [1178, 943]];
  var er1 = ring(ep, 1154, 941, 43, 27, 12), er2 = ring(ep, 1156, 943, 36, 20, 11);

  var head = [[848, 791], [869, 761], [883, 733], [911, 725], [929, 730], [943, 763], [943, 786], [975, 739], [989, 731], [1034, 725], [1066, 778], [1097, 787], [1106, 801], [1124, 836], [1164, 866], [1144, 905], [1112, 957], [1076, 963], [1055, 969], [1023, 970], [1000, 979], [977, 987], [960, 985], [930, 990], [868, 963], [857, 946], [869, 928], [867, 918], [866, 886], [860, 870], [850, 843], [851, 828], [855, 815], [856, 800]];
  var hp = [[889, 762], [887, 790], [897, 736], [899, 788], [931, 787], [930, 762], [1007, 736], [965, 773], [1020, 766], [1037, 777], [1069, 783], [1069, 795], [1000, 773], [1010, 765], [985, 757], [1030, 752], [1104, 865], [1121, 865], [1108, 843], [1073, 842], [1073, 858], [1145, 862], [1142, 879], [1080, 895], [1082, 930], [1092, 908], [1054, 947], [1020, 935], [910, 898], [930, 918], [911, 940], [895, 905], [871, 903], [925, 955], [958, 957], [1005, 952], [1040, 940], [890, 930], [905, 963], [940, 905], [975, 905]];
  var eye1 = ring(hp, 1008, 868, 55, 52, 18), eye2 = ring(hp, 1007, 868, 49, 46, 15), eye3 = ring(hp, 1003, 868, 41, 38, 11);
  ring(hp, 1002, 867, 21, 18, 6); hp.push([980, 864]);
  ring(hp, 944, 869, 16, 29, 20); ring(hp, 944, 868, 11, 21, 18); ring(hp, 943, 868, 6, 13, 10);
  ring(hp, 867, 835, 10, 33, 18); ring(hp, 864, 835, 6, 25, 14);
  var le = ring(hp, 885, 833, 19, 28, 10);
  fill(hp, head, 856, 793, 80, 20, 24); fill(hp, head, 935, 785, 120, 26, 18); fill(hp, head, 900, 800, 36, 90, 14);
  fill(hp, head, 1098, 850, 60, 100, 20); fill(hp, head, 960, 930, 150, 45, 22); fill(hp, head, 865, 890, 100, 90, 16); fill(hp, head, 1050, 790, 50, 60, 7);
  ring(hp, 893, 946, 20, 18, 10);

  var jaw = [[868, 963], [880, 940], [906, 968], [935, 968], [960, 960], [977, 987], [968, 1015], [963, 1055], [955, 1093], [942, 1114], [937, 1115], [906, 1113], [870, 1092], [848, 1064], [843, 1037], [846, 1018], [858, 979]];
  var jp = [[922, 989], [885, 978], [866, 1003], [888, 1010], [917, 1023], [941, 1000], [926, 1037], [943, 1045], [909, 1020], [889, 1050], [926, 1084], [909, 1104], [908, 1078], [942, 1080], [865, 1045], [877, 1064], [863, 979], [872, 976], [900, 977], [860, 1030]];
  ring(jp, 870, 1067, 14, 16, 12); ring(jp, 872, 1070, 8, 10, 9); fill(jp, jaw, 845, 990, 18, 75, 14); fill(jp, jaw, 870, 985, 85, 110, 7);

  mesh(head, hp); mesh(jaw, jp); mesh(ear, ep);

  // faces turned away from the light
  poly([[929, 730], [943, 763], [943, 786], [937, 796], [931, 785]], '#050500', W);
  line(929, 750, 943, 763, W); line(931, 785, 943, 763, W);
  poly([[883, 733], [911, 725], [929, 730], [897, 736]], '#b0ae00', W);
  poly([[975, 739], [989, 731], [1034, 725], [1007, 736]], '#a9a700', W);
  poly([[1034, 725], [1007, 736], [1037, 777], [1066, 778]], '#c8c600', W);
  line(1007, 736, 1066, 778, W); line(1034, 725, 1020, 766, W); line(1034, 725, 1045, 778, W);
  poly([[1069, 795], [1106, 801], [1122, 836], [1104, 865], [1073, 842], [1060, 818]], '#bab800', W);
  [[1069, 795, 1104, 843], [1060, 818, 1122, 836], [1073, 842, 1106, 801], [1069, 783, 1108, 860], [1037, 777, 1122, 836], [1060, 818, 1104, 865], [1069, 795, 1122, 865], [1097, 787, 1037, 777], [1060, 830, 1106, 838], [1080, 800, 1121, 865]].forEach(function (l) { line(l[0], l[1], l[2], l[3], W); });
  poly([[1008, 818], [1034, 822], [1054, 842], [1061, 866], [1052, 888], [1048, 865], [1042, 845], [1028, 832]], '#a5a300', W);
  poly([[1050, 888], [1052, 900], [1030, 917], [1015, 918], [1035, 905]], '#b4b200', W);
  poly([[972, 833], [985, 819], [1006, 818], [1003, 829], [985, 832]], '#aaa800', W);
  poly([[875, 811], [877, 830], [870, 848], [873, 833]], '#6a6800', W);
  poly([[908, 930], [911, 942], [908, 960], [900, 976], [903, 955]], '#8a8800', W);
  poly([[912, 898], [930, 903], [945, 915], [912, 932]], '#bcba00', W);
  poly([[1105, 958], [1135, 953], [1128, 964], [1143, 968], [1176, 962], [1193, 945], [1197, 938], [1194, 948], [1177, 968], [1145, 973], [1116, 970]], '#525000', W);
  poly([[1187, 928], [1196, 916], [1198, 939], [1191, 943]], '#9b9900', W);

  cross(ep, ear, 16, 14, 34); cross(hp, head, 230, 10, 46); cross(jp, jaw, 40, 14, 50);
  [eye1, eye2, eye3, le, er1, er2].forEach(function (e) { poly(e, 'none', W, 1.5); });
  eye1.forEach(function (p, i) { var q = eye3[Math.floor(i * 11 / 18)]; line(p[0], p[1], q[0], q[1], W); });
  [[962, 858, 1048, 872], [1004, 830, 1000, 905], [980, 864, 1040, 895], [970, 840, 1035, 900], [975, 892, 1030, 838], [1019, 834, 1021, 903]].forEach(function (l) { line(l[0], l[1], l[2], l[3], W); });

  poly([[960, 960], [969, 962], [977, 987], [968, 1015], [963, 1055], [955, 1093], [944, 1112], [948, 1075], [957, 1020]], '#5c5a00', W);
  [[960, 985, 977, 987], [957, 1010, 968, 1015], [955, 1030, 966, 1035], [949, 1070, 963, 1045], [946, 1090, 958, 1075], [969, 962, 966, 1030], [966, 1030, 944, 1112]].forEach(function (l) { line(l[0], l[1], l[2], l[3], W); });
  poly([[853, 1060], [868, 1070], [877, 1077], [873, 1090], [862, 1080]], '#4d4b00', W);

  // axes
  out.push('<g stroke-width="1.4">'); line(832, 882, 998, 915, '#0000ff'); line(1006, 822, 998, 914, '#ff0000'); line(1069, 796, 998, 914, '#00ff00'); out.push('</g>');
  var v = document.getElementById('view');
  v.setAttribute('shape-rendering', 'crispEdges');
  v.innerHTML = out.join('');
}());
```
